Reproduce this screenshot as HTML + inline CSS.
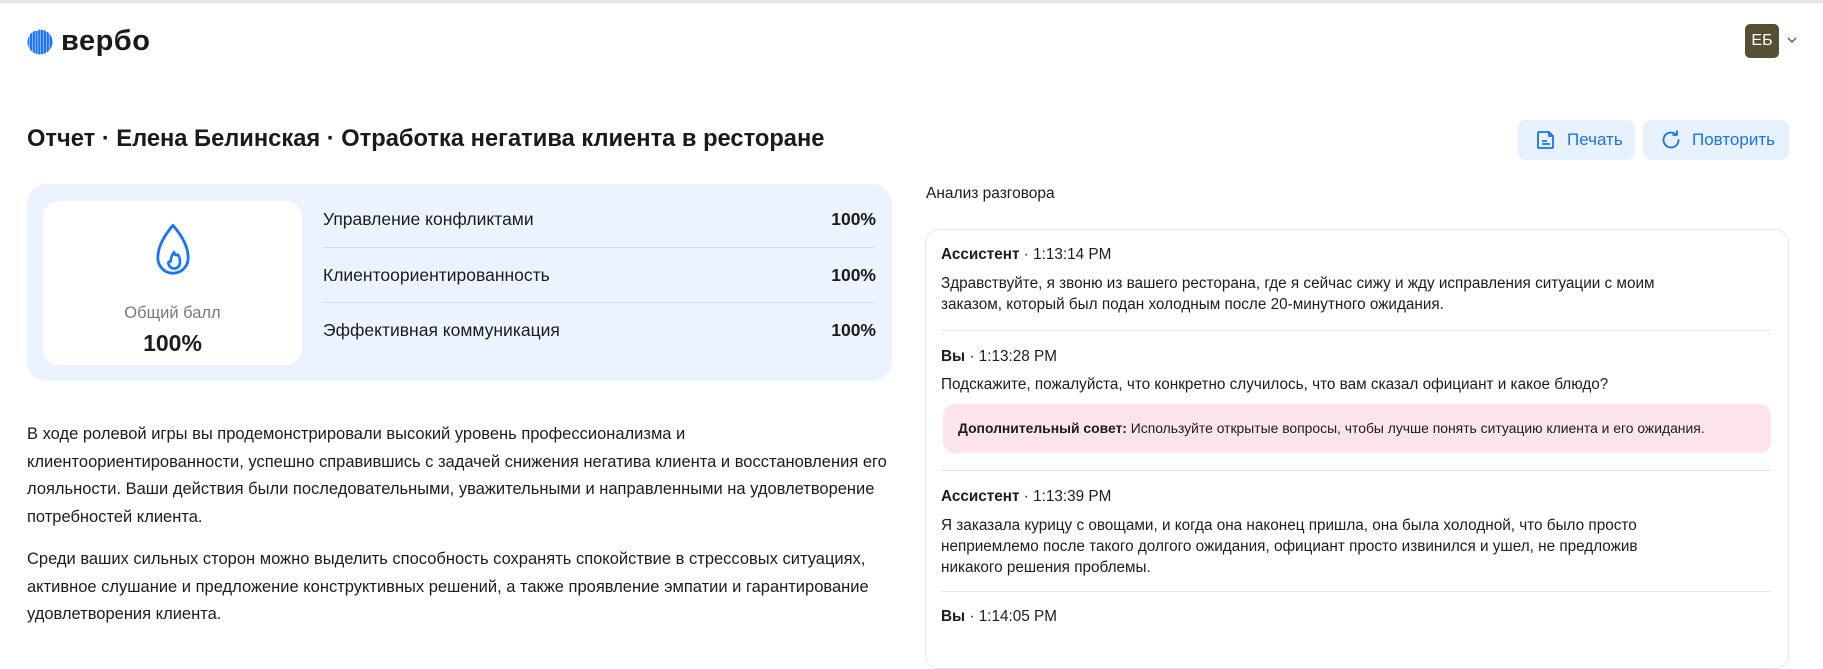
<!DOCTYPE html>
<html><head><meta charset="utf-8">
<style>
*{box-sizing:border-box;margin:0;padding:0}
body{width:1823px;height:629px;overflow:hidden;background:#fff;font-family:"Liberation Sans","Noto Sans CJK SC",sans-serif;color:#1c1c1c;position:relative}
.a{position:absolute}
.topline{left:0;top:0;width:1823px;height:3px;background:#e6e6e6}
.logo{left:61px;top:25px;font-size:29px;font-weight:600;letter-spacing:0.5px;color:#1a1a1a}
.av{left:1745px;top:24px;width:34px;height:34px;background:#574f33;border-radius:5px;color:#fff;font-size:16px;text-align:center;line-height:34px}
.btn{top:120px;height:40px;background:#e8f2fe;border-radius:8px;color:#1a73e8;font-size:17px;display:flex;align-items:center;gap:10px;padding-left:17px}
h1{position:absolute;left:27px;top:126px;font-size:23.7px;font-weight:600;color:#1a1a1a}
.panel{left:27px;top:184px;width:865px;height:197px;background:#eaf3fe;border-radius:20px}
.card{left:43px;top:201px;width:259px;height:164px;background:#fff;border-radius:16px;text-align:center}
.row{left:323px;width:553px;height:55px;display:flex;justify-content:space-between;align-items:center;font-size:17.5px}
.row b{font-weight:700}
.div{left:323px;width:553px;height:1px;background:#d5dde7}
.p{left:27px;width:880px;font-size:16.5px;line-height:27.5px;color:#1c1c1c}
.chat{left:925px;top:229px;width:864px;height:440px;border:1px solid #e5e5e5;border-radius:14px}
.m{left:941px;width:832px;font-size:15.3px;line-height:21px}
.m .h{font-weight:700}
.hr{left:941px;width:830px;height:1px;background:#e3e3e3}
.tip{left:943px;top:404px;width:828px;height:49px;background:#fde3ea;border-radius:12px;font-size:13.9px;padding-left:15px;line-height:49px}
</style></head><body>
<div class="a topline"></div>
<svg class="a" style="left:27px;top:29px" width="26" height="26" viewBox="0 0 26 26">
<defs><clipPath id="c"><circle cx="13" cy="13" r="12.5"/></clipPath></defs>
<g clip-path="url(#c)" fill="#1a73ff">
<rect x="0" y="7" width="2.3" height="12"/><rect x="2.8" y="4" width="2.3" height="18"/><rect x="5.6" y="1" width="2.3" height="24"/><rect x="8.4" y="2" width="2.3" height="23"/><rect x="11.2" y="0" width="2.3" height="26"/><rect x="14" y="1" width="2.3" height="24"/><rect x="16.8" y="0" width="2.3" height="25"/><rect x="19.6" y="3" width="2.3" height="20"/><rect x="22.4" y="5" width="3.6" height="16"/>
</g></svg>
<div class="a logo">вербо</div>
<div class="a av">ЕБ</div>
<svg class="a" style="left:1787px;top:37px" width="10" height="7" viewBox="0 0 10 7"><path d="M1 1l4 4 4-4" fill="none" stroke="#555" stroke-width="1.4"/></svg>
<h1>Отчет · Елена Белинская · Отработка негатива клиента в ресторане</h1>
<div class="a btn" style="left:1518px;width:117px">
<svg width="22" height="22" viewBox="0 0 22 22"><path d="M4 3h10l4 4v11a1 1 0 0 1-1 1H4a1 1 0 0 1-1-1V4a1 1 0 0 1 1-1z" fill="none" stroke="#1a73e8" stroke-width="1.8" stroke-linejoin="round"/><path d="M14 3v4h4M7 12h5M7 15h8" fill="none" stroke="#1a73e8" stroke-width="1.8"/></svg>Печать</div>
<div class="a btn" style="left:1643px;width:146px">
<svg width="22" height="22" viewBox="0 0 22 22"><path d="M18.5 11A7.5 7.5 0 1 1 16 5.4" fill="none" stroke="#1a73e8" stroke-width="1.8" stroke-linecap="round"/><path d="M17 2v4h-4" fill="none" stroke="#1a73e8" stroke-width="1.8" stroke-linecap="round" stroke-linejoin="round"/></svg>Повторить</div>

<div class="a panel"></div>
<div class="a card">
<svg style="margin-top:22px" width="40" height="56" viewBox="0 0 32 48"><path d="M16 2C11 8 3 18 3 30a13 13 0 0 0 26 0C29 18 21 8 16 2z" fill="none" stroke="#1a73ff" stroke-width="2.4" stroke-linejoin="round"/><path d="M14 33c0-4 2-7 3-8 0 3 2 3 3 2 2 2 2 5 2 7a5 5 0 0 1-10 0c0-1 1-1 2-1z" fill="none" stroke="#1a73ff" stroke-width="2.2" stroke-linejoin="round"/></svg>
<div style="color:#7a7a7a;font-size:16.5px;margin-top:20px">Общий балл</div>
<div style="font-size:23px;font-weight:700;margin-top:7px">100%</div>
</div>
<div class="a row" style="top:192px"><span>Управление конфликтами</span><b>100%</b></div>
<div class="a div" style="top:247px"></div>
<div class="a row" style="top:248px"><span>Клиентоориентированность</span><b>100%</b></div>
<div class="a div" style="top:302px"></div>
<div class="a row" style="top:303px"><span>Эффективная коммуникация</span><b>100%</b></div>

<div class="a p" style="top:421px">В ходе ролевой игры вы продемонстрировали высокий уровень профессионализма и<br>клиентоориентированности, успешно справившись с задачей снижения негатива клиента и восстановления его<br>лояльности. Ваши действия были последовательными, уважительными и направленными на удовлетворение<br>потребностей клиента.</div>
<div class="a p" style="top:546px">Среди ваших сильных сторон можно выделить способность сохранять спокойствие в стрессовых ситуациях,<br>активное слушание и предложение конструктивных решений, а также проявление эмпатии и гарантирование<br>удовлетворения клиента.</div>

<div class="a" style="left:926px;top:185px;font-size:15.5px">Анализ разговора</div>
<div class="a chat"></div>
<div class="a m" style="top:244px"><span class="h">Ассистент</span> · 1:13:14 PM</div>
<div class="a m" style="top:273px">Здравствуйте, я звоню из вашего ресторана, где я сейчас сижу и жду исправления ситуации с моим<br>заказом, который был подан холодным после 20-минутного ожидания.</div>
<div class="a hr" style="top:330px"></div>
<div class="a m" style="top:346px"><span class="h">Вы</span> · 1:13:28 PM</div>
<div class="a m" style="top:374px">Подскажите, пожалуйста, что конкретно случилось, что вам сказал официант и какое блюдо?</div>
<div class="a tip"><b>Дополнительный совет:</b> Используйте открытые вопросы, чтобы лучше понять ситуацию клиента и его ожидания.</div>
<div class="a hr" style="top:470px"></div>
<div class="a m" style="top:486px"><span class="h">Ассистент</span> · 1:13:39 PM</div>
<div class="a m" style="top:515px">Я заказала курицу с овощами, и когда она наконец пришла, она была холодной, что было просто<br>неприемлемо после такого долгого ожидания, официант просто извинился и ушел, не предложив<br>никакого решения проблемы.</div>
<div class="a hr" style="top:591px"></div>
<div class="a m" style="top:606px"><span class="h">Вы</span> · 1:14:05 PM</div>
</body></html>
